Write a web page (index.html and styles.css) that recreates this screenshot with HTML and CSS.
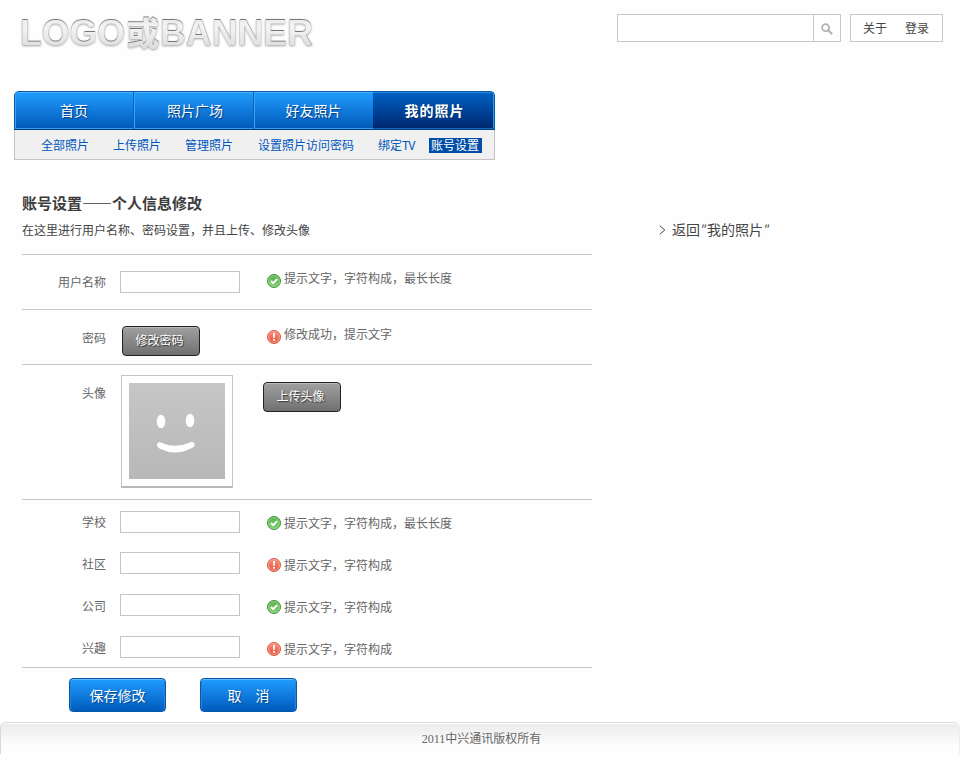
FILE: index.html
```html
<!DOCTYPE html>
<html lang="zh-CN">
<head>
<meta charset="utf-8">
<title>账号设置</title>
<link rel="stylesheet" href="styles.css">
</head>
<body>
<svg class="defs" width="0" height="0" aria-hidden="true">
  <defs>
    <linearGradient id="green" x1="0" y1="0" x2="0" y2="1"><stop offset="0" stop-color="#57b04b"/><stop offset="1" stop-color="#80cf70"/></linearGradient>
    <linearGradient id="red" x1="0" y1="0" x2="0" y2="1"><stop offset="0" stop-color="#f58d78"/><stop offset="1" stop-color="#e4573f"/></linearGradient>
    <symbol id="ok" viewBox="0 0 14 14">
      <circle cx="7" cy="7" r="6.5" fill="url(#green)" stroke="#43913b"/>
      <circle cx="7" cy="7" r="5.4" fill="none" stroke="#9bdc8d" stroke-width=".8"/>
      <path d="M3.9 7.1 6.2 9.2 10.2 5.1" fill="none" stroke="#fff" stroke-width="2"/>
    </symbol>
    <symbol id="err" viewBox="0 0 14 14">
      <circle cx="7" cy="7" r="6.5" fill="url(#red)" stroke="#d75c48"/>
      <circle cx="7" cy="7" r="5.4" fill="none" stroke="#f9aa9a" stroke-width=".8"/>
      <path d="M6 3h2l-.3 5H6.3zM6.1 9h1.8v1.8H6.1z" fill="#fff"/>
    </symbol>
  </defs>
</svg>
<header class="header">
  <svg class="logo" width="306" height="60" viewBox="0 0 306 60">
    <defs>
      <linearGradient id="silver" x1="0" y1="16" x2="0" y2="47" gradientUnits="userSpaceOnUse"><stop offset="0" stop-color="#e6e6e6"/><stop offset=".35" stop-color="#f4f4f4"/><stop offset="1" stop-color="#dedede"/></linearGradient>
      <filter id="inset" x="-5%" y="-20%" width="110%" height="150%">
        <feOffset in="SourceAlpha" dx=".4" dy="1" result="o"/>
        <feGaussianBlur in="o" stdDeviation=".35" result="b"/>
        <feComposite in="SourceAlpha" in2="b" operator="out" result="edge"/>
        <feFlood flood-color="#777"/>
        <feComposite in2="edge" operator="in" result="inner"/>
        <feDropShadow in="SourceGraphic" dx="0" dy="1" stdDeviation=".9" flood-color="#777" flood-opacity=".7" result="base"/>
        <feMerge><feMergeNode in="base"/><feMergeNode in="inner"/></feMerge>
      </filter>
    </defs>
    <g class="logo-text" fill="url(#silver)" filter="url(#inset)">
      <text x="2" y="44.500" textLength="105" lengthAdjust="spacingAndGlyphs">LOGO</text>
      <text class="logo-cjk" x="108.500" y="45">或</text>
      <text x="142" y="44.500" textLength="153" lengthAdjust="spacingAndGlyphs">BANNER</text>
    </g>
  </svg>
  <div class="tools">
    <form class="search">
      <input class="search-input" type="text" aria-label="搜索">
      <button class="search-btn" type="button" aria-label="搜索"><svg width="12" height="12" viewBox="0 0 12 12" fill="none" stroke="#b2b2b2"><circle cx="4.6" cy="4.6" r="3.5" stroke-width="1.8"/><path d="m7.3 7.3 3.9 3.9" stroke-width="2.2"/></svg></button>
    </form>
    <div class="user-links"><a>关于</a><a>登录</a></div>
  </div>
</header>
<nav class="nav">
  <div class="tabs">
    <a class="tab">首页</a><a class="tab">照片广场</a><a class="tab">好友照片</a><a class="tab active">我的照片</a>
  </div>
  <div class="subnav">
    <a>全部照片</a><a>上传照片</a><a>管理照片</a><a>设置照片访问密码</a><a>绑定<span class="tv">TV</span></a><a class="current">账号设置</a>
  </div>
</nav>
<main class="main">
  <section class="content">
    <h1>账号设置——个人信息修改</h1>
    <p class="intro">在这里进行用户名称、密码设置，并且上传、修改头像</p>
    <div class="row">
      <label>用户名称</label><div><input class="field" type="text"></div>
      <div class="hint"><svg><use href="#ok"/></svg><span>提示文字，字符构成，最长长度</span></div>
    </div>
    <div class="row">
      <label>密码</label><div><button class="gray-btn" type="button">修改密码</button></div>
      <div class="hint"><svg><use href="#err"/></svg><span>修改成功，提示文字</span></div>
    </div>
    <div class="row avatar-row">
      <label>头像</label>
      <div class="avatar"><svg width="96" height="96" viewBox="0 0 96 96">
        <defs><linearGradient id="face" x1="0" y1="0" x2="0" y2="1"><stop offset="0" stop-color="#c6c6c6"/><stop offset="1" stop-color="#b8b8b8"/></linearGradient></defs>
        <path fill="url(#face)" d="M0 0h96v96H0z"/>
        <ellipse cx="32" cy="38.5" rx="4.3" ry="6.8" fill="#fff"/><ellipse cx="61" cy="37.5" rx="4.3" ry="6.8" fill="#fff"/>
        <path d="M28.200 61c1-2.500 3.500-1.800 5.300-.8q13.500 5.500 26.500-.5c2-1 4.500-1.500 5.500 1 .6 2-1 3.700-3 4.600q-16 8-31 .7c-2-1-4-2.500-3.300-5z" fill="#fff"/>
      </svg></div>
      <div><button class="gray-btn" type="button">上传头像</button></div>
    </div>
    <div class="details">
      <div class="line"><label>学校</label><input class="field" type="text"><div class="hint"><svg><use href="#ok"/></svg><span>提示文字，字符构成，最长长度</span></div></div>
      <div class="line"><label>社区</label><input class="field" type="text"><div class="hint"><svg><use href="#err"/></svg><span>提示文字，字符构成</span></div></div>
      <div class="line"><label>公司</label><input class="field" type="text"><div class="hint"><svg><use href="#ok"/></svg><span>提示文字，字符构成</span></div></div>
      <div class="line"><label>兴趣</label><input class="field" type="text"><div class="hint"><svg><use href="#err"/></svg><span>提示文字，字符构成</span></div></div>
    </div>
    <div class="actions"><button class="blue-btn" type="button">保存修改</button><button class="blue-btn" type="button">取　消</button></div>
  </section>
  <aside class="side"><svg width="7" height="10" viewBox="0 0 7 10"><path d="m.8.8 5 4.200-5 4.200" fill="none" stroke="#444"/></svg><a>返回<i>"</i>我的照片<i>"</i></a></aside>
</main>
<footer class="footer">2011中兴通讯版权所有</footer>
</body>
</html>
```

FILE: styles.css
```css
* { box-sizing: border-box; }
body {
  margin: 0;
  width: 960px;
  height: 780px;
  overflow: hidden;
  background: #fefefe;
  color: #555;
  font: 12px/16px "Noto Sans CJK SC", sans-serif;
}
button, input { margin: 0; padding: 0; font: inherit; outline: 0; }
.defs { display: block; }
.header {
  display: flex;
  justify-content: space-between;
  height: 91px;
  padding: 0 17px 0 18px;
}
.logo-text { font: bold 37px "Liberation Sans", sans-serif; }
.logo-cjk { font: 900 33px "Noto Sans CJK SC", sans-serif; }
.tools { display: flex; gap: 9px; padding-top: 14px; }
.search { display: flex; width: 224px; height: 28px; border: 1px solid #c8c8c8; }
.search-input { width: 195px; border: 0; background: #fff; }
.search-btn {
  display: flex;
  flex: 1;
  align-items: center;
  justify-content: center;
  padding-top: 2px;
  border: 0;
  border-left: 1px solid #c8c8c8;
  background: #fff;
}
.user-links {
  display: flex;
  gap: 18px;
  width: 93px;
  height: 28px;
  padding-left: 12px;
  border: 1px solid #c8c8c8;
  background: #fff;
  color: #444;
  line-height: 26px;
}
.nav { width: 481px; margin-left: 14px; }
.tabs {
  display: grid;
  grid-template-columns: 119px 120px 119px 121px;
  height: 39px;
  overflow: hidden;
  border: 1px solid #0758a8;
  border-bottom-color: #003f83;
  border-radius: 5px 5px 0 0;
  background: linear-gradient(#219cff, #0059b8);
}
.tab {
  border-right: 1px solid #0762b8;
  box-shadow: inset 0 1px #49b0fb, inset 0 -1px #379cf0, inset 1px 0 #3ba5f5;
  color: #fff;
  font-size: 14px;
  line-height: 37px;
  text-align: center;
  text-shadow: 1px 1px 1px #033c7c;
}
.tab:nth-child(2) { padding-left: 3px; }
.tab:nth-child(3) { border-right: 0; }
.tab.active {
  padding-left: 2px;
  border: 0;
  background: linear-gradient(#0062c4, #00266f);
  box-shadow: inset 0 1px #2588d6, inset 0 -1px #1568b8, inset -1px 0 #2c9cee;
  font-weight: bold;
  letter-spacing: 1px;
}
.subnav {
  display: flex;
  height: 30px;
  padding: 7px 0 0 26px;
  border: 1px solid #c4c4c4;
  border-top: 0;
  background: #f0f0f0;
  color: #0057bd;
  white-space: nowrap;
}
.subnav a { margin-right: 24px; }
.subnav a:nth-child(3) { margin-right: 25px; }
.subnav a:nth-child(5) { width: 37px; margin-right: 14px; }
.tv { font: 12px "Liberation Mono", monospace; letter-spacing: -1px; }
.subnav .current {
  width: 53px;
  height: 15px;
  margin: 1px 0 0;
  padding-left: 2px;
  background: #004ea6;
  color: #fff;
  line-height: 14px;
}
.main { display: flex; padding-left: 22px; height: 562px; }
.content { width: 570px; padding-top: 33px; }
h1 { margin: 0; color: #3c3c3c; font-size: 15px; line-height: 20px; }
.intro { height: 41px; margin: 0; padding-top: 9px; color: #444; }
.row {
  display: grid;
  grid-template-columns: 84px 147px 1fr;
  column-gap: 14px;
  height: 55px;
  padding-top: 16px;
  border-top: 1px solid #c8c8c8;
}
label { color: #666; text-align: right; }
.row label { padding-top: 3px; }
.row + .row label { padding-top: 4px; }
.row .gray-btn { margin-left: 2px; }
.hint { display: flex; align-items: center; gap: 3px; color: #666; }
.hint svg { width: 14px; height: 14px; }
.row .hint { align-items: flex-start; }
.row > div:nth-child(3) { margin-left: -14px; }
.row .hint svg { margin-top: 3px; }
.row + .row .hint svg { margin-top: 4px; }
.row .hint span { margin-top: -1px; }
.row + .row .hint span { margin-top: 0; }
.field { display: block; width: 120px; height: 22px; border: 1px solid #c4c4c4; background: #fff; }
.gray-btn {
  display: block;
  width: 78px;
  height: 30px;
  padding: 0 3px 2px 0;
  border: 1px solid #222;
  border-radius: 4px;
  background: linear-gradient(#a0a0a0, #707070);
  box-shadow: inset 0 1px #bbb;
  color: #fff;
  line-height: 26px;
  text-shadow: 1px 1px 1px #333;
}
.avatar-row { height: 135px; padding-top: 10px; }
.row.avatar-row label { padding-top: 10px; }
.avatar {
  width: 112px;
  height: 113px;
  margin-left: 1px;
  padding: 7px;
  border: 1px solid #c4c4c4;
  border-bottom: 2px solid #b8b8b8;
  background: #fff;
}
.avatar svg { display: block; }
.avatar-row .gray-btn { margin: 7px 0 0 12px; }
.row.avatar-row > div:nth-child(3) { margin-left: -16px; }
.avatar-row .gray-btn { margin-left: -2px; }
.details { height: 169px; border: solid #c8c8c8; border-width: 1px 0; padding-top: 1px; }
.line { display: grid; grid-template-columns: 84px 120px 1fr; column-gap: 14px; align-items: center; height: 42px; }
.line .field { margin-top: -2px; }
.line:first-child .field { margin-top: 0; }
.line .hint { margin: 1px 0 0 13px; }
.actions { display: flex; gap: 34px; padding: 10px 0 0 47px; }
.blue-btn {
  width: 97px;
  height: 34px;
  border: 1px solid #0657a5;
  border-radius: 4px;
  background: linear-gradient(#219cff, #005bbd);
  box-shadow: inset 0 1px #63baff, inset 1px 0 #2386dc, inset -1px 0 #2386dc;
  color: #fff;
  font-size: 14px;
  text-shadow: 1px 1px 1px #034a93;
}
.side { display: flex; align-items: flex-start; gap: 6px; padding: 60px 0 0 67px; color: #444; font-size: 14px; line-height: 18px; }
.side svg { margin-top: 5px; }
.side i { display: inline-block; width: 7px; font-size: 12px; text-indent: -1px; }
.footer {
  height: 32px;
  padding-left: 3px;
  border: 1px solid #d9d9d9;
  border-right-color: #eee;
  border-bottom: 0;
  border-radius: 6px 6px 0 0;
  background: linear-gradient(#ebebeb, #fefefe 24px);
  box-shadow: inset 0 1px #fff;
  color: #666;
  font-family: "Liberation Serif", "Noto Sans CJK SC", serif;
  line-height: 32px;
  text-align: center;
}
```
